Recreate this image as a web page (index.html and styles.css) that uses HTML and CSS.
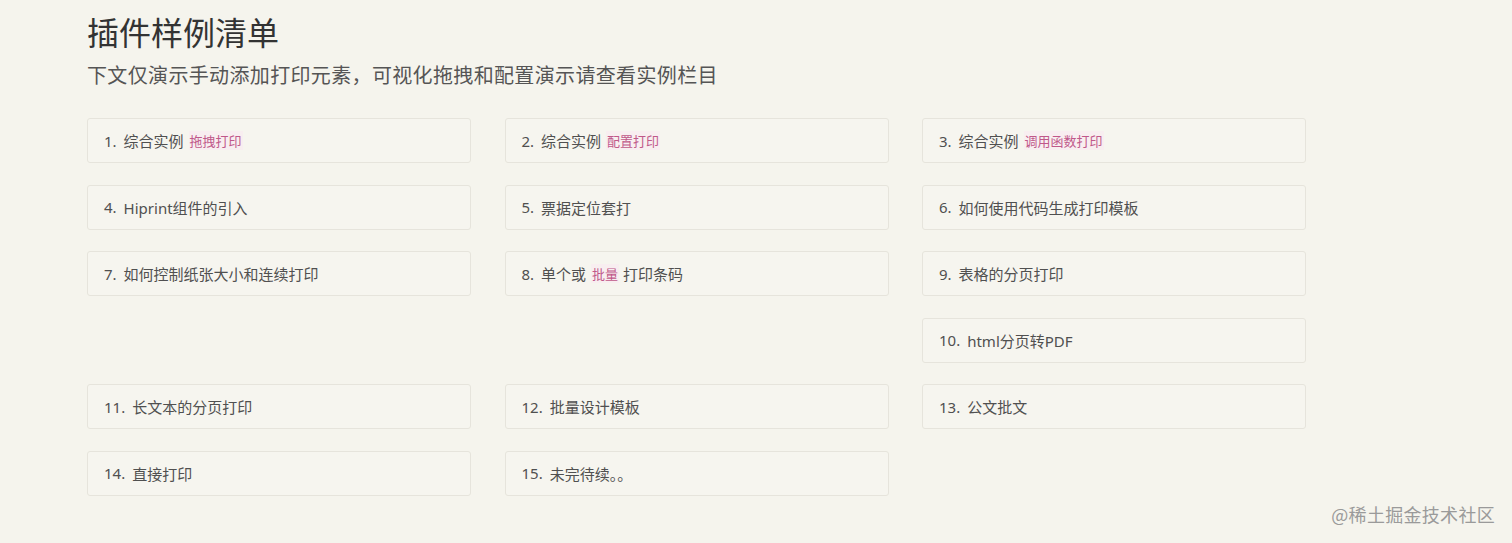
FILE: index.html
```html
<!DOCTYPE html>
<html lang="zh-CN">
<head>
<meta charset="utf-8">
<title>插件样例清单</title>
<link rel="stylesheet" href="styles.css">
</head>
<body>
<main class="page">
  <h1 class="title">插件样例清单</h1>
  <p class="subtitle">下文仅演示手动添加打印元素，可视化拖拽和配置演示请查看实例栏目</p>
  <ul class="list">
    <li class="card"><span class="num">1.</span>综合实例 <code class="tag">拖拽打印</code></li>
    <li class="card"><span class="num">2.</span>综合实例 <code class="tag">配置打印</code></li>
    <li class="card"><span class="num">3.</span>综合实例 <code class="tag">调用函数打印</code></li>
    <li class="card"><span class="num">4.</span>Hiprint组件的引入</li>
    <li class="card"><span class="num">5.</span>票据定位套打</li>
    <li class="card"><span class="num">6.</span>如何使用代码生成打印模板</li>
    <li class="card"><span class="num">7.</span>如何控制纸张大小和连续打印</li>
    <li class="card"><span class="num">8.</span>单个或 <code class="tag">批量</code> 打印条码</li>
    <li class="card"><span class="num">9.</span>表格的分页打印</li>
    <li class="card col3"><span class="num">10.</span>html分页转PDF</li>
    <li class="card"><span class="num">11.</span>长文本的分页打印</li>
    <li class="card"><span class="num">12.</span>批量设计模板</li>
    <li class="card"><span class="num">13.</span>公文批文</li>
    <li class="card"><span class="num">14.</span>直接打印</li>
    <li class="card"><span class="num">15.</span>未完待续。。</li>
  </ul>
</main>
<div class="watermark">@稀土掘金技术社区</div>
</body>
</html>
```
FILE: styles.css
```css
html, body {
  margin: 0;
  padding: 0;
  background: #f5f4ed;
}
body {
  font-family: "Noto Sans", "Noto Sans CJK SC", sans-serif;
  color: #444;
  height: 543px;
  overflow: hidden;
  position: relative;
}
.page {
  padding: 0 0 0 87px;
}
.title {
  margin: 0;
  padding-top: 9px;
  font-size: 32px;
  line-height: 44px;
  font-weight: 400;
  color: #333;
  font-family: "Noto Sans CJK SC", sans-serif;
}
.subtitle {
  margin: 7px 0 0;
  font-size: 20px;
  line-height: 30px;
  color: #555;
  letter-spacing: 0.35px;
  font-family: "Noto Sans CJK SC", sans-serif;
}
.list {
  list-style: none;
  margin: 28px 0 0;
  padding: 0;
  display: grid;
  grid-template-columns: repeat(3, 384px);
  column-gap: 33.5px;
  row-gap: 21.6px;
}
.card {
  box-sizing: border-box;
  height: 45px;
  display: flex;
  align-items: center;
  padding: 0 16px;
  background: #f6f5ef;
  border: 1px solid #e6e4dc;
  border-radius: 3px;
  font-size: 15px;
  color: #505050;
  white-space: pre;
}
.col3 {
  grid-column: 3;
}
.num {
  margin-right: 7px;
}
.tag {
  font-family: "Noto Sans CJK SC", serif;
  font-size: 13px;
  color: #c0588a;
  background: #f8eef0;
  padding: 0 1px;
  margin: 0 0 0 1px;
}
.watermark {
  position: absolute;
  right: 17px;
  bottom: 16px;
  font-size: 18px;
  color: #9a9a9a;
  font-family: "Noto Sans CJK SC", sans-serif;
  letter-spacing: 0.3px;
}
```
